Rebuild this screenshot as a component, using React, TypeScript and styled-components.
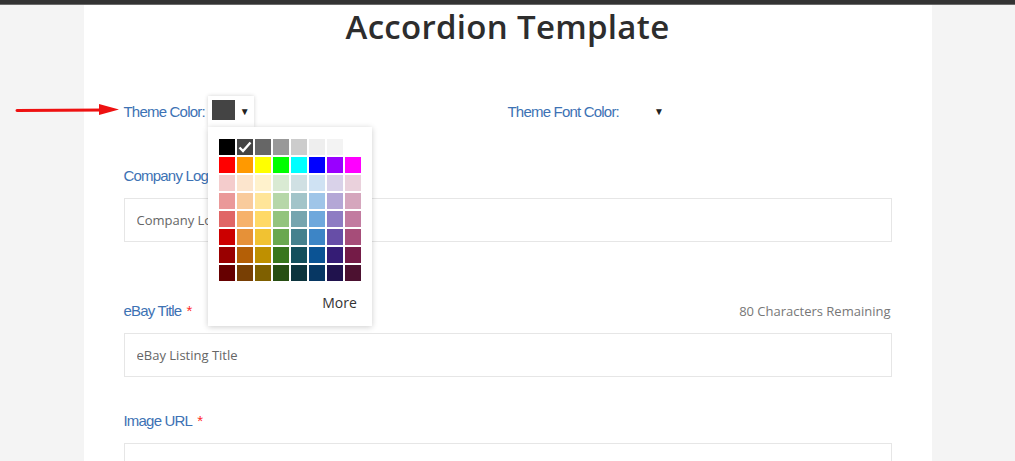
import React from "react";
import styled, { createGlobalStyle } from "styled-components";

const GlobalStyle = createGlobalStyle`
  html, body { margin: 0; padding: 0; }
  body {
    background: #f4f4f4;
    font-family: "Open Sans", "Liberation Sans", sans-serif;
    overflow: hidden;
  }
`;

const TopBar = styled.div`
  height: 4px;
  background: #333333;
  border-bottom: 1px solid #6a6a6a;
`;

const Page = styled.div`
  position: relative;
`;

const Panel = styled.main`
  width: 848px;
  margin: 0 auto;
  background: #ffffff;
  box-sizing: border-box;
  padding: 0 40px 40px;
  min-height: 600px;
`;

const Title = styled.h1`
  margin: 0;
  text-align: center;
  font-family: "Open Sans", "Liberation Sans", sans-serif;
  font-weight: 600;
  font-size: 33px;
  line-height: 44px;
  color: #2d2d2d;
  letter-spacing: 0.3px;
`;

const ThemeRow = styled.div`
  display: grid;
  grid-template-columns: 1fr 1fr;
  margin-top: 47px;
  height: 31px;
  margin-bottom: 37px;
`;

const ColorField = styled.div`
  display: flex;
  align-items: center;
  gap: 3px;
`;

const Label = styled.label`
  font-family: "Liberation Sans", "Arial", sans-serif;
  font-size: 15px;
  letter-spacing: -0.8px;
  line-height: 24px;
  color: #3d72b4;
  display: block;
`;

const Star = styled.span`
  color: #ff2a2a;
  margin-left: 5px;
`;

const ColorButton = styled.div<{ $open?: boolean }>`
  position: relative;
  width: 46px;
  height: 31px;
  box-sizing: border-box;
  padding: 4px;
  display: flex;
  align-items: flex-start;
  gap: 4px;
  background: #fff;
  box-shadow: ${(p) => (p.$open ? "0 0 4px rgba(0,0,0,0.18)" : "none")};
`;

const Swatch = styled.div<{ $color: string }>`
  width: 25px;
  height: 20px;
  background: ${(p) => p.$color};
`;

const Caret = styled.span`
  font-size: 10px;
  color: #222;
  line-height: 22px;
  margin-left: 1px;
`;

const Popup = styled.div`
  position: absolute;
  top: 31px;
  left: 0;
  width: 164px;
  box-sizing: border-box;
  padding: 12px 15px 13px 11px;
  background: #fff;
  box-shadow: 0 1px 6px rgba(0, 0, 0, 0.2);
  z-index: 5;
`;

const Grid = styled.div`
  display: grid;
  grid-template-columns: repeat(8, 16px);
  grid-auto-rows: 16px;
  gap: 2px;
`;

const Cell = styled.div<{ $color: string }>`
  background: ${(p) => p.$color};
  display: flex;
  align-items: center;
  justify-content: center;
`;

const More = styled.div`
  margin-top: 12px;
  text-align: right;
  font-size: 14px;
  line-height: 20px;
  color: #333;
`;

const Field = styled.div<{ $gap: number }>`
  margin-bottom: ${(p) => p.$gap}px;
`;

const LabelRow = styled.div`
  display: flex;
  justify-content: space-between;
  align-items: center;
  margin-bottom: 10px;
`;

const Counter = styled.span`
  font-size: 13px;
  color: #777;
  margin-right: 1px;
`;

const Input = styled.input`
  display: block;
  width: 100%;
  box-sizing: border-box;
  height: 44px;
  border: 1px solid #e6e6e6;
  padding: 0 12px;
  font-family: "Open Sans", "Liberation Sans", sans-serif;
  font-size: 13px;
  color: #555;
  outline: none;
  &::placeholder { color: #666; }
`;

const Arrow = styled.svg`
  position: absolute;
  left: 15px;
  top: 95px;
`;

const palette = [
  ["#000000", "#444444", "#666666", "#999999", "#cccccc", "#eeeeee", "#f3f3f3", "#ffffff"],
  ["#ff0000", "#ff9900", "#ffff00", "#00ff00", "#00ffff", "#0000ff", "#9900ff", "#ff00ff"],
  ["#f4cccc", "#fce5cd", "#fff2cc", "#d9ead3", "#d0e0e3", "#cfe2f3", "#d9d2e9", "#ead1dc"],
  ["#ea9999", "#f9cb9c", "#ffe599", "#b6d7a8", "#a2c4c9", "#9fc5e8", "#b4a7d6", "#d5a6bd"],
  ["#e06666", "#f6b26b", "#ffd966", "#93c47d", "#76a5af", "#6fa8dc", "#8e7cc3", "#c27ba0"],
  ["#cc0000", "#e69138", "#f1c232", "#6aa84f", "#45818e", "#3d85c6", "#674ea7", "#a64d79"],
  ["#990000", "#b45f06", "#bf9000", "#38761d", "#134f5c", "#0b5394", "#351c75", "#741b47"],
  ["#660000", "#783f04", "#7f6000", "#274e13", "#0c343d", "#073763", "#20124d", "#4c1130"],
];

export default function App() {
  return (
    <>
      <GlobalStyle />
      <TopBar />
      <Page>
        <Arrow width="106" height="20" viewBox="0 0 106 20">
          <line x1="2" y1="10.5" x2="90" y2="10" stroke="#ee1111" strokeWidth="3" strokeLinecap="round" />
          <polygon points="84,4 104,9.5 84,15" fill="#ee1111" />
        </Arrow>
        <Panel>
          <Title>Accordion Template</Title>
          <ThemeRow>
            <ColorField>
              <Label>Theme Color:</Label>
              <ColorButton $open>
                <Swatch $color="#444444" />
                <Caret>▼</Caret>
                <Popup>
                  <Grid>
                    {palette.flat().map((c, i) => (
                      <Cell key={i} $color={c}>
                        {c === "#444444" && (
                          <svg width="14" height="12" viewBox="0 0 14 12">
                            <path d="M1.5 6.5 L5 10 L12.5 1.5" fill="none" stroke="#fff" strokeWidth="2.4" />
                          </svg>
                        )}
                      </Cell>
                    ))}
                  </Grid>
                  <More>More</More>
                </Popup>
              </ColorButton>
            </ColorField>
            <ColorField>
              <Label>Theme Font Color:</Label>
              <ColorButton>
                <Swatch $color="#ffffff" />
                <Caret>▼</Caret>
              </ColorButton>
            </ColorField>
          </ThemeRow>

          <Field $gap={57}>
            <LabelRow>
              <Label>Company Logo</Label>
            </LabelRow>
            <Input placeholder="Company Logo" />
          </Field>

          <Field $gap={32}>
            <LabelRow>
              <Label>
                eBay Title<Star>*</Star>
              </Label>
              <Counter>80 Characters Remaining</Counter>
            </LabelRow>
            <Input placeholder="eBay Listing Title" />
          </Field>

          <Field $gap={32}>
            <LabelRow>
              <Label>
                Image URL<Star>*</Star>
              </Label>
            </LabelRow>
            <Input placeholder="Image URL" />
          </Field>
        </Panel>
      </Page>
    </>
  );
}
